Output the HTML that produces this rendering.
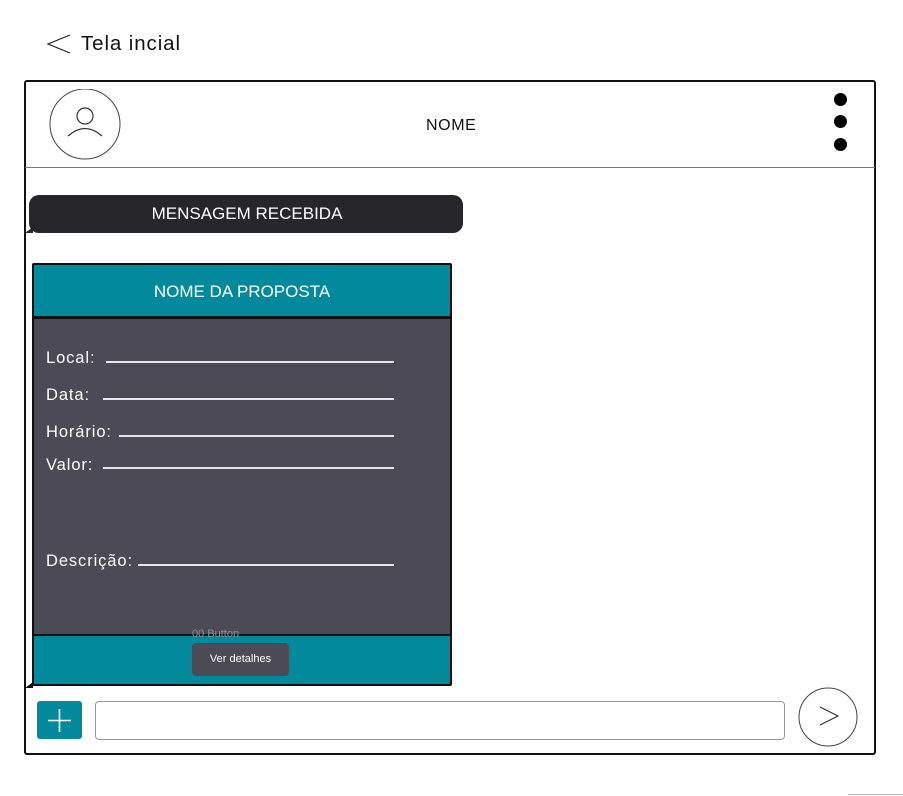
<!DOCTYPE html>
<html><head><meta charset="utf-8"><style>
*{margin:0;padding:0;box-sizing:border-box}
body{width:903px;height:796px;background:#fff;position:relative;font-family:"Liberation Sans",sans-serif;overflow:hidden}
.a{position:absolute}
.lbl{position:absolute;left:46px;color:#fff;font-size:16.5px;line-height:18px;letter-spacing:0.9px}
.ln{position:absolute;height:2px;background:#e8e8ec}
</style></head><body>
<svg class="a" style="left:46px;top:33px" width="26" height="22"><path d="M24 2 L2 11 L24 20" fill="none" stroke="#222" stroke-width="1.2"/></svg>
<div class="a" style="left:81px;top:32px;font-size:20.5px;color:#111;letter-spacing:0.9px">Tela incial</div>

<div class="a" style="left:24px;top:80px;width:852px;height:675px;border:2px solid #111;border-radius:3px"></div>
<div class="a" style="left:25px;top:167px;width:850px;height:1px;background:#777"></div>
<svg class="a" style="left:49px;top:89px" width="74" height="72"><circle cx="36" cy="35" r="35" fill="none" stroke="#444" stroke-width="1"/><circle cx="36" cy="27" r="8" fill="none" stroke="#333" stroke-width="1.2"/><path d="M19 47 Q36 32 53 47" fill="none" stroke="#333" stroke-width="1.2"/></svg>
<div class="a" style="left:426px;top:117px;font-size:16px;color:#111;letter-spacing:0.6px">NOME</div>
<div class="a" style="left:834px;top:93px;width:13px;height:13px;border-radius:50%;background:#000"></div>
<div class="a" style="left:834px;top:115px;width:13px;height:13px;border-radius:50%;background:#000"></div>
<div class="a" style="left:834px;top:138px;width:13px;height:13px;border-radius:50%;background:#000"></div>

<div class="a" style="left:29px;top:195px;width:434px;height:38px;background:#27272b;border-radius:10px;color:#fff;font-size:17px;text-align:center;line-height:38px;padding-left:2px">MENSAGEM RECEBIDA</div>
<div class="a" style="left:25px;top:227px;width:0;height:0;border-top:6px solid transparent;border-right:8px solid #27272b"></div>

<div class="a" style="left:32px;top:263px;width:420px;height:423px;border:2px solid #111;border-radius:2px;background:#4b4a55;overflow:hidden">
<div class="a" style="left:0;top:0;width:416px;height:54px;background:#028a9c;border-bottom:3px solid #111;color:#fff;font-size:17px;text-align:center;line-height:54px">NOME DA PROPOSTA</div>
<div class="a" style="left:0;top:369px;width:416px;height:52px;background:#028a9c;border-top:2px solid #111"></div>
</div>
<div class="a" style="left:25px;top:682px;width:0;height:0;border-top:6px solid transparent;border-right:8px solid #111"></div>
<div class="lbl" style="top:349px">Local:</div><div class="ln" style="left:106px;top:361px;width:288px"></div>
<div class="lbl" style="top:386px">Data:</div><div class="ln" style="left:103px;top:398px;width:291px"></div>
<div class="lbl" style="top:423px">Horário:</div><div class="ln" style="left:119px;top:435px;width:275px"></div>
<div class="lbl" style="top:456px">Valor:</div><div class="ln" style="left:103px;top:467px;width:291px"></div>
<div class="lbl" style="top:552px">Descrição:</div><div class="ln" style="left:138px;top:564px;width:256px"></div>
<div class="a" style="left:192px;top:628px;font-size:11px;color:#8e8e98">00 Button</div>
<div class="a" style="left:192px;top:643px;width:97px;height:33px;background:#4b4a55;border-radius:4px;color:#fff;font-size:11px;text-align:center;line-height:33px">Ver detalhes</div>

<div class="a" style="left:37px;top:701px;width:45px;height:38px;background:#028a9c;border-radius:3px"></div>
<svg class="a" style="left:37px;top:701px" width="45" height="38"><path d="M22.5 8 V31 M11 19.5 H34" stroke="#fff" stroke-width="1.6"/></svg>
<div class="a" style="left:95px;top:701px;width:690px;height:39px;border:1px solid #999;border-radius:4px"></div>
<svg class="a" style="left:798px;top:687px" width="60" height="60"><circle cx="30" cy="30" r="29" fill="none" stroke="#444" stroke-width="1"/><path d="M22 20 L40 29 L22 38" fill="none" stroke="#333" stroke-width="1.2"/></svg>
<div class="a" style="left:848px;top:794px;width:55px;height:1px;background:#bbb"></div>
</body></html>
